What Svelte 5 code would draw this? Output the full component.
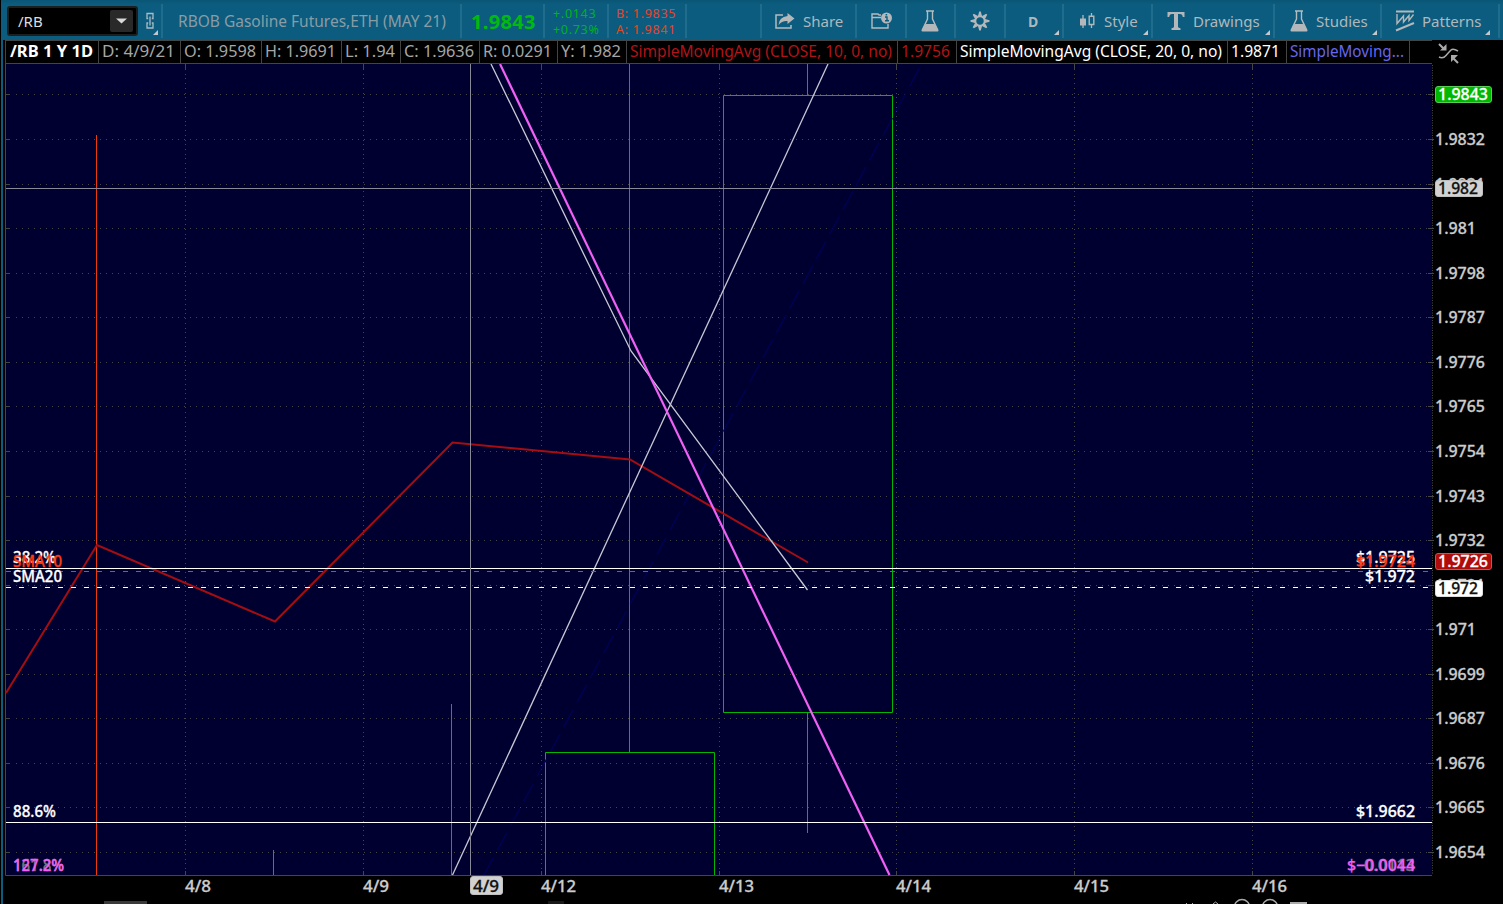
<script lang="ts">
    const cells = [
        { text: '/RB 1 Y 1D', w: 93, len: 83, kind: 'symbol' },
        { text: 'D: 4/9/21', w: 82, len: 73, kind: 'dim' },
        { text: 'O: 1.9598', w: 81, len: 72, kind: 'dim' },
        { text: 'H: 1.9691', w: 80, len: 71, kind: 'dim' },
        { text: 'L: 1.94', w: 59, len: 50, kind: 'dim' },
        { text: 'C: 1.9636', w: 79, len: 70, kind: 'dim' },
        { text: 'R: 0.0291', w: 78, len: 69, kind: 'dim' },
        { text: 'Y: 1.982', w: 69, len: 60, kind: 'dim' },
        { text: 'SimpleMovingAvg (CLOSE, 10, 0, no)', w: 271, len: 262, kind: 'red' },
        { text: '1.9756', w: 59, len: 49, kind: 'red' },
        { text: 'SimpleMovingAvg (CLOSE, 20, 0, no)', w: 271, len: 262, kind: 'white' },
        { text: '1.9871', w: 59, len: 49, kind: 'white' },
        { text: 'SimpleMoving...', w: 123, len: 114, kind: 'violet' },
        { text: '', w: 23, len: 0, kind: 'dim' },
    ];

    const prices = [
        { y: 94, label: '' },
        { y: 139, label: '1.9832' },
        { y: 184, label: '1.9821' },
        { y: 228, label: '1.981' },
        { y: 273, label: '1.9798' },
        { y: 317, label: '1.9787' },
        { y: 362, label: '1.9776' },
        { y: 406, label: '1.9765' },
        { y: 451, label: '1.9754' },
        { y: 496, label: '1.9743' },
        { y: 540, label: '1.9732' },
        { y: 585, label: '1.9721' },
        { y: 629, label: '1.971' },
        { y: 674, label: '1.9699' },
        { y: 718, label: '1.9687' },
        { y: 763, label: '1.9676' },
        { y: 807, label: '1.9665' },
        { y: 852, label: '1.9654' },
    ];

    const days = [
        { x: 185, label: '4/8' },
        { x: 363, label: '4/9' },
        { x: 541, label: '4/12' },
        { x: 719, label: '4/13' },
        { x: 896, label: '4/14' },
        { x: 1074, label: '4/15' },
        { x: 1252, label: '4/16' },
    ];

    const badges = [
        { y: 86, w: 57, len: 50, label: '1.9843', fill: '#00b800', stroke: '#55d055', ink: '#fff' },
        { y: 180, w: 48, len: 40, label: '1.982', fill: '#d2d2d2', stroke: '#c0c0c0', ink: '#111' },
        { y: 553, w: 57, len: 50, label: '1.9726', fill: '#b00c0c', stroke: '#cf5050', ink: '#fff' },
        { y: 580, w: 48, len: 40, label: '1.972', fill: '#fff', stroke: '#ddd', ink: '#111' },
    ];
</script>

{#snippet flask()}
    <svg class="flask" width="18" height="22" viewBox="0 0 18 22">
        <path d="M5 1h8M6.5 1v8L1.5 19.5h15L11.500 9V1" fill="none" stroke="#b4bcc0" stroke-width="1.4" />
        <path d="M4.500 14h9l4 6.500q0 1-1 1h-15q-1 0-1-1z" fill="#b4b8ba" />
    </svg>
{/snippet}

{#snippet corner()}
    <svg class="corner" width="5" height="5" viewBox="0 0 5 5"><path d="M5 0v5H0z" fill="#c4c8ca" /></svg>
{/snippet}

{#snippet label(x: number, y: number, len: number, text: string, ink?: string)}
    <text {x} {y} textLength={len} lengthAdjust="spacingAndGlyphs" fill={ink} stroke={ink}>{text}</text>
{/snippet}

<div class="window">
    <div class="toolbar">
        <div class="symbol-box">
            <span>/RB</span>
            <button aria-label="Symbols"><svg width="23" height="22" viewBox="0 0 23 22"><path d="M6 8.500h11l-5.500 5z" fill="#d8d8d8" /></svg></button>
        </div>
        <div class="tool link">
            <svg width="10" height="18" viewBox="0 0 10 18" fill="none" stroke="#a9bcc5" stroke-width="1.300">
                <path d="M3.200 6.500H2V1.500h6v5H6.800M3.200 11H2v5h6v-5H6.800M5 4.500v9" />
            </svg>
            {@render corner()}
        </div>
        <div class="tool name"><span>RBOB Gasoline Futures,ETH (MAY 21)</span></div>
        <div class="tool last">1.9843</div>
        <div class="tool pair up"><span>+.0143</span><span>+0.73%</span></div>
        <div class="tool pair down"><span>B: 1.9835</span><span>A: 1.9841</span></div>
        <div class="tool spacer"></div>
        <div class="tool share">
            <svg width="22" height="18" viewBox="0 0 22 18">
                <path d="M9 3H2v13h15v-3" fill="none" stroke="#b4bcc0" stroke-width="1.500" />
                <path d="M13.500 1l7 5.500-7 5.500V9Q8 8.500 4.500 13 5 5 13.500 4z" fill="#b4b8ba" />
            </svg>
            <span>Share</span>
        </div>
        <div class="tool news">
            <svg width="22" height="18" viewBox="0 0 22 18">
                <path d="M10 3H8L7 2H1v14h16v-4M1 5.500h9" fill="none" stroke="#b4bcc0" stroke-width="1.400" />
                <circle cx="15.500" cy="6" r="5.500" fill="#b4b8ba" />
                <path d="M14 5h2v3.500h1.300M14 8.800h4M14.600 2.800h1.600" fill="none" stroke="#0b5c7f" stroke-width="1.400" />
            </svg>
        </div>
        <div class="tool lab">{@render flask()}</div>
        <div class="tool gear">
            <svg width="20" height="20" viewBox="-10 -10 20 20">
                {#each [0, 45, 90, 135, 180, 225, 270, 315] as a}
                    <path d="M-2 -5h4L.8 -9.500H-.8z" transform="rotate({a})" fill="#b4b8ba" />
                {/each}
                <circle r="4.700" fill="none" stroke="#b4b8ba" stroke-width="1.900" />
            </svg>
        </div>
        <div class="tool period"><b>D</b>{@render corner()}</div>
        <div class="tool style">
            <svg width="17" height="18" viewBox="0 0 17 18">
                <path d="M4 3v13M12.500 1v3M12.500 12.500V16" stroke="#b4b8ba" stroke-width="1.300" />
                <path d="M1 6.500h6v7H1z" fill="#b4b8ba" />
                <path d="M10.200 4.200h4.600v8.300h-4.600z" fill="none" stroke="#b4b8ba" stroke-width="1.400" />
            </svg>
            <span>Style</span>{@render corner()}
        </div>
        <div class="tool drawings">
            <svg width="18" height="18" viewBox="0 0 18 18"><path d="M.5 0h17v5h-1.700Q15.500 2 13 2H11v12.500q0 1.500 2.500 1.800V18h-9v-1.700Q7 16 7 14.500V2H5Q2.500 2 2.200 5H.5z" fill="#b4b8ba" /></svg>
            <span>Drawings</span>{@render corner()}
        </div>
        <div class="tool studies">{@render flask()}<span>Studies</span>{@render corner()}</div>
        <div class="tool patterns">
            <svg width="20" height="22" viewBox="0 0 20 22" fill="none" stroke="#b4b8ba">
                <path d="M1 1.500h18M1 20.500L19 13" stroke-width="2" />
                <path d="M2 4v9.500L8.500 6v6L14 5.500v5L18.500 4.500" stroke-width="1.400" />
            </svg>
            <span>Patterns</span>{@render corner()}
        </div>
        <div class="tool tail"></div>
    </div>

    <div class="readout">
        {#each cells as cell}
            <div class="cell {cell.kind}" style:width="{cell.w}px">
                {#if cell.text}
                    <svg width={cell.len} height="22"><text x="0" y="16" textLength={cell.len} lengthAdjust="spacingAndGlyphs">{cell.text}</text></svg>
                {/if}
            </div>
        {/each}
        <svg class="fit" width="22" height="22" viewBox="0 0 22 22">
            <path d="M1 15q4 2 7-1.500T13 8t7 1" fill="none" stroke="#aaa" stroke-width="1.500" />
            <path d="M1 2l5 5M20 21l-5-5" stroke="#aaa" stroke-width="2" />
            <path d="M8.500 2v6.500H2zM13 13v7l7-7z" fill="#aaa" />
        </svg>
    </div>

    <svg class="chart" width="1503" height="840" viewBox="0 64 1503 840">
        <rect x="6" y="64" width="1426" height="811" fill="#000030" />

        <g class="grid">
            {#each prices as p}
                <line x1="16" x2="1428" y1={p.y + 0.5} y2={p.y + 0.5} stroke-dasharray="1 5" />
                <path d="M6 {p.y + 0.5}h4M1428 {p.y + 0.5}h6" />
            {/each}
            {#each days as d}
                <line x1={d.x + 0.5} x2={d.x + 0.5} y1="69" y2="871" stroke-dasharray="1 3.7" shape-rendering="crispEdges" />
                <path d="M{d.x + 0.5} 64v5M{d.x + 0.5} 871v4" />
            {/each}
            <line x1="1432.500" x2="1432.500" y1="65" y2="875" stroke-dasharray="1 1.500" />
            <path d="M5.500 64v811.500H1432" />
        </g>

        <g class="candles">
            <path d="M273.500 850v25M451.500 704v171M629.500 64v688M807.500 64v31M807.500 713v120" />
            <path d="M545.500 875V752.500h169V875M723.500 95.500h169v617h-169z" />
            <path class="bear" d="M96.500 135v740" />
        </g>

        <line x1="484" y1="875" x2="921" y2="65" stroke="#000058" stroke-width="1.300" stroke-dasharray="20 8" />
        <polyline points="6,693 97,545 275,621.500 452.500,442.500 630,459.500 808,562.500" fill="none" stroke="#a50d12" stroke-width="2" />
        <polyline points="491,64 631,351 807.500,590" fill="none" stroke="#c8c8d6" stroke-width="1.300" />
        <line x1="452.500" y1="875" x2="828" y2="64" stroke="#c8c8d6" stroke-width="1.300" />
        <line x1="500" y1="64" x2="889.500" y2="875" stroke="#f060f5" stroke-width="2.200" />

        <path d="M6 571.500H1432" stroke="#f0380c" stroke-dasharray="5 8" />
        <path d="M6 587.500H1432" stroke="#fff" stroke-dasharray="5 8" />
        <path d="M6 568.500H1432M6 822.500H1432" stroke="#fff" />
        <path d="M470.500 64V875M6 188.500H1432" stroke="#888899" />

        <g class="levels">
            {@render label(13, 563, 43, '38.2%')}
            {@render label(13, 566.5, 49, 'SMA10', '#ff3a10')}
            {@render label(13, 582, 49, 'SMA20')}
            {@render label(13, 817, 43, '88.6%')}
            {@render label(13, 871, 51, '161.8%', '#77777c')}
            {@render label(13, 871, 51, '127.2%', '#f060f5')}
            {@render label(1356, 563, 59, '$1.9725')}
            {@render label(1356, 566.5, 59, '$1.9724', '#ff3a10')}
            {@render label(1365, 582, 50, '$1.972')}
            {@render label(1356, 817, 59, '$1.9662')}
            {@render label(1364, 871, 51, '0.0113', '#77777c')}
            {@render label(1347, 871, 68, '$−0.0044', '#f060f5')}
        </g>

        <g class="axis">
            {#each prices as p}
                {#if p.label}
                    {@render label(1435, p.y + 6, p.label.length === 6 ? 50 : 41, p.label, '#ccc')}
                {/if}
            {/each}
            {#each days as d}
                {@render label(d.x, 892, d.label.length === 3 ? 26 : 35, d.label, '#ccc')}
            {/each}
            {#each badges as b}
                <rect x="1435.500" y={b.y + 0.5} width={b.w - 1} height="16" rx="2.500" fill={b.fill} stroke={b.stroke} />
                {@render label(1438, b.y + 14, b.len, b.label, b.ink)}
            {/each}
            <rect x="470.500" y="876.500" width="32" height="18" rx="2.500" fill="#d2d2d2" stroke="#c0c0c0" />
            {@render label(473, 891.5, 26, '4/9', '#111')}
        </g>

        <g class="footer">
            <rect x="104" y="901" width="43" height="3" fill="#3a3a3a" />
            <rect x="548" y="901" width="16" height="3" fill="#181818" />
            <circle cx="1242" cy="907" r="7.500" />
            <circle cx="1270" cy="907" r="7.500" />
            <rect x="1290" y="902" width="17" height="2" fill="#aaa" />
            <path d="M1213 904l2.500-2 2.500 2M1186 903.500h1M1192 903.500h1" />
        </g>
    </svg>
</div>

<style>
    :global(body) {
        margin: 0;
        background: #000;
    }
    .window {
        width: 1503px;
        height: 904px;
        overflow: hidden;
        background: linear-gradient(90deg, #000 1px, #0b5c7f 1px, #0b5c7f 3px, #000 3px);
        font-family: "Noto Sans", "Open Sans", sans-serif;
        font-size: 15px;
    }
    .toolbar {
        display: flex;
        height: 36px;
        padding: 4px 0 0 6px;
        margin-left: 1px;
        background: linear-gradient(#0a5677 1px, #0b5c7f 4px);
        color: #b0b8bc;
    }
    .symbol-box {
        display: flex;
        justify-content: space-between;
        align-items: center;
        box-sizing: border-box;
        width: 131px;
        height: 30px;
        margin-top: 2px;
        padding: 0 3px 0 9px;
        border: 2px solid #1b201f;
        border-radius: 3px;
        background: #000;
        color: #ddd;
    }
    .symbol-box button {
        display: flex;
        width: 23px;
        height: 22px;
        padding: 0;
        border: 0;
        border-radius: 2px;
        background: #292929;
    }
    .tool {
        position: relative;
        display: flex;
        align-items: center;
        box-sizing: border-box;
        height: 34px;
        border-right: 2px solid #1f6c8c;
        white-space: nowrap;
    }
    .corner {
        position: absolute;
        right: 3px;
        bottom: 3px;
    }
    .link { width: 25px; padding-left: 7px; }
    .name { width: 299px; padding-left: 15px; color: #899ca5; font-size: 15.5px; }
    .last { width: 83px; padding-left: 9px; color: #00ba12; font-size: 20px; font-weight: 700; letter-spacing: 0.3px; }
    .pair { flex-direction: column; align-items: flex-start; justify-content: center; padding-top: 2px; font-size: 12.5px; line-height: 16px; letter-spacing: 0.7px; }
    .up { width: 64px; padding-left: 8px; color: #00b318; }
    .down { width: 78px; padding-left: 7px; color: #e34820; }
    .spacer { width: 75px; }
    .share { width: 95px; padding-left: 12px; gap: 7px; }
    .news { width: 50px; padding-left: 14px; }
    .lab { width: 49px; padding-left: 14px; }
    .gear { width: 50px; padding-left: 14px; }
    .period { width: 58px; padding-left: 22px; font-size: 14px; }
    .style { width: 89px; padding-left: 15px; gap: 8px; }
    .drawings { width: 122px; padding-left: 14px; gap: 8px; }
    .studies { width: 107px; padding-left: 15px; gap: 8px; }
    .patterns { width: 118px; padding-left: 13px; gap: 7px; }
    .patterns .corner, .patterns :global(.corner) { right: 8px; }
    .tail { flex: 1; border: 0; }

    .readout {
        display: flex;
        height: 24px;
        margin-left: 5px;
        background: #000;
    }
    .cell {
        flex-shrink: 0;
        box-sizing: border-box;
        border: 1px solid #444;
        border-right: 0;
        padding-left: 3px;
        font-size: 16px;
    }
    .cell.symbol { padding-left: 4px; }
    .cell svg { display: block; overflow: visible; }
    .cell text { fill: currentColor; }
    .symbol { color: #fff; font-weight: 700; }
    .dim { color: #a6a6a6; }
    .red { color: #b01418; }
    .white { color: #fff; }
    .violet { color: #6666ee; }
    .fit { margin: 2px 0 0 6px; }

    .chart { display: block; }
    .grid line, .grid path { fill: none; stroke: #464646; }
    .candles path { fill: none; stroke: #00b800; }
    .candles .bear { stroke: #f0380c; }
    .chart text { font-size: 16px; font-weight: 500; stroke-width: 0.3px; }
    .levels { fill: #fff; stroke: #fff; }
    .footer circle { fill: none; stroke: #aaa; stroke-width: 1.5px; }
    .footer path { fill: none; stroke: #aaa; }
</style>
